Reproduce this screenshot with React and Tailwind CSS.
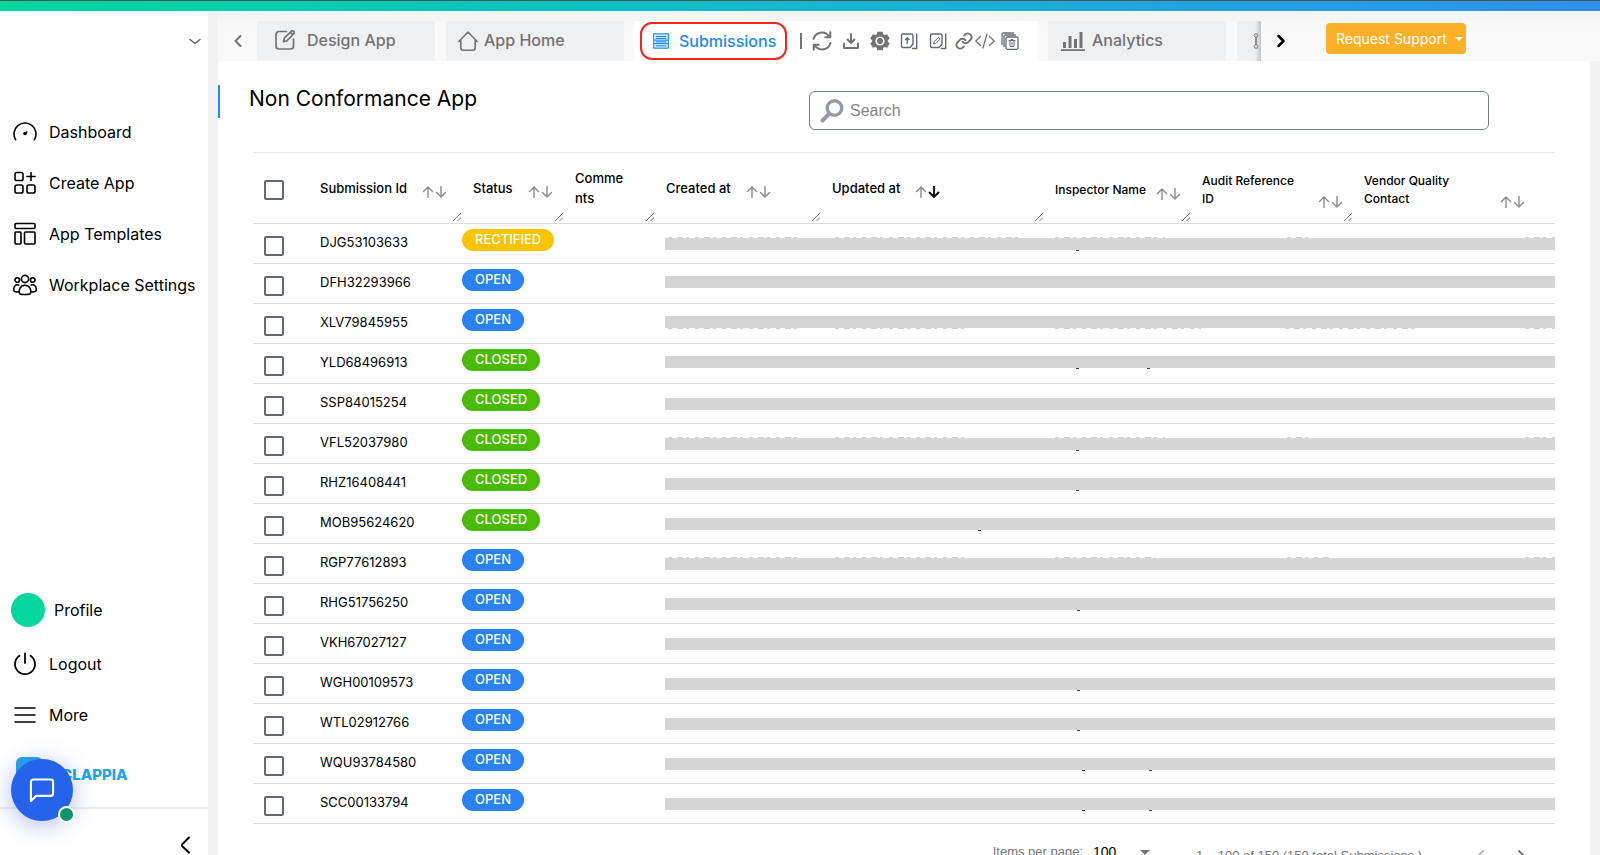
import React from "react";

const NAV_TOP = ["Dashboard", "Create App", "App Templates", "Workplace Settings"];

const ROWS = [
  ["DJG53103633", "RECTIFIED"],
  ["DFH32293966", "OPEN"],
  ["XLV79845955", "OPEN"],
  ["YLD68496913", "CLOSED"],
  ["SSP84015254", "CLOSED"],
  ["VFL52037980", "CLOSED"],
  ["RHZ16408441", "CLOSED"],
  ["MOB95624620", "CLOSED"],
  ["RGP77612893", "OPEN"],
  ["RHG51756250", "OPEN"],
  ["VKH67027127", "OPEN"],
  ["WGH00109573", "OPEN"],
  ["WTL02912766", "OPEN"],
  ["WQU93784580", "OPEN"],
  ["SCC00133794", "OPEN"],
];

const BADGE = {
  RECTIFIED: "bg-[#fbc400]",
  OPEN: "bg-[#2a82f4]",
  CLOSED: "bg-[#4bbb02]",
};

/* Rows whose masked strip sits slightly higher than centre. */
const RAISED = [1, 2, 3];
/* Descenders showing below the strip: offsets from its left edge. */
const DESCENDERS = {
  0: [411], 3: [411, 482], 5: [411], 6: [411], 7: [313], 9: [412], 11: [412],
  12: [412], 13: [417, 484], 14: [417, 484],
};
/* Letter edges showing at the top (0) or bottom (13) of the strip. */
const EDGES = {
  0: [0, [[3, 138], [170, 357], [390, 500], [622, 648], [860, 890]]],
  2: [13, [[3, 138], [170, 302], [390, 536], [620, 754], [860, 890]]],
  5: [0, [[3, 138], [170, 302], [390, 500], [622, 648], [860, 890]]],
  8: [0, [[3, 138], [170, 302], [390, 490], [622, 664], [860, 890]]],
};

function Icon({ children, className = "size-6", box = 24, w = 1.5 }) {
  return (
    <svg viewBox={`0 0 ${box} ${box}`} className={className} fill="none" stroke="currentColor"
      strokeWidth={w} strokeLinecap="round" strokeLinejoin="round" aria-hidden="true">
      {children}
    </svg>
  );
}

const NAV_ICONS = [
  <Icon key="d" w={1.6}>
    <path d="M2.6 19.7A11 11 0 1 1 21.400 19.700" />
    <circle cx="12" cy="13.500" r="1.800" fill="currentColor" stroke="none" />
    <path d="m12 13.500 1.800-1.500" />
  </Icon>,
  <Icon key="c" w={1.6}>
    <rect x="2" y="1.5" width="8" height="8" rx="1.8" />
    <rect x="2" y="14" width="8" height="8" rx="1.8" />
    <rect x="14" y="14" width="8" height="8" rx="1.8" />
    <path d="M18 1.5v8M14 5.5h8" />
  </Icon>,
  <Icon key="t" w={1.6}>
    <rect x="2" y="1.5" width="20" height="5" rx="1" />
    <rect x="2" y="10" width="6" height="12" rx="1" />
    <rect x="11.5" y="10" width="10.5" height="12" rx="1" />
  </Icon>,
  <Icon key="w" w={1.6}>
    <circle cx="12" cy="6" r="3.6" />
    <circle cx="4.3" cy="7" r="2.3" />
    <circle cx="19.7" cy="7" r="2.3" />
    <path d="M6.5 20.3c-1-2.8.3-8 5.500-8s6.500 5.200 5.500 8c-.8 1.600-10.200 1.600-11 0z" />
    <path d="M5.800 12c-3.300-1-5.500 1.700-5 5.400.2 1.500 3 1.800 5 1.400M18.200 12c3.300-1 5.500 1.700 5 5.400-.2 1.500-3 1.800-5 1.400" />
  </Icon>,
];

function NavLink({ icon, label }) {
  return (
    <a href="#" className="flex h-[51px] items-center gap-3 pl-[13px] text-base text-black">
      {icon}
      {label}
    </a>
  );
}

function Sidebar() {
  return (
    <aside className="flex w-52 shrink-0 flex-col bg-white">
      <button aria-label="Switch workplace" className="mt-[22px] mr-[5px] self-end text-[#5f6b7a]">
        <Icon className="h-4 w-4" box={16} w={1.6}><path d="m3 6.500 5 4 5-4" /></Icon>
      </button>
      <nav className="mt-[57px] flex flex-col">
        {NAV_TOP.map((label, i) => <NavLink key={label} icon={NAV_ICONS[i]} label={label} />)}
      </nav>
      <nav className="mt-auto mb-px flex flex-col">
        <a href="#" className="flex h-14 items-center gap-[9px] pl-[11px] text-base text-black">
          <span className="size-[34px] rounded-full bg-[#06d79f]" />
          Profile
        </a>
        <NavLink label="Logout" icon={
          <Icon w={1.8}><path d="M12 1.500v9.500M6.500 3.800a10 10 0 1 0 11 0" /></Icon>} />
        <NavLink label="More" icon={
          <Icon w={1.6}><path d="M2 5h20M2 12h20M2 19h20" /></Icon>} />
      </nav>
      <div className="relative h-[68px] border-b-2 border-[#ececec]">
        <div className="flex items-center pt-4 pl-4">
          <span className="h-9 w-[27px] rounded-md bg-[#2ba5ea]" />
          <span className="pl-[18px] text-[15px] font-extrabold text-[#22a3ec]">CLAPPIA</span>
        </div>
        <button aria-label="Open chat"
          className="absolute top-[18px] left-[11px] flex size-[62px] items-center justify-center rounded-full bg-[#2563eb] text-white shadow-[0_4px_24px_rgba(37,60,200,0.35)]">
          <Icon className="size-7" w={1.8}><path d="M21.500 15a2 2 0 0 1-2 2H7l-4.500 4.500V5a2 2 0 0 1 2-2h15a2 2 0 0 1 2 2z" /></Icon>
          <span className="absolute -right-0.5 -bottom-0.5 size-[17px] rounded-full border-2 border-white bg-[#0a9468]" />
        </button>
      </div>
      <div className="flex h-[46px] justify-end pt-[25px] pr-3.5">
        <button aria-label="Collapse menu">
          <Icon className="size-[18px]" box={18} w={2}><path d="M13 1.500 6.500 8q-1.300 1.200 0 2.400L13 16.500" /></Icon>
        </button>
      </div>
    </aside>
  );
}

function Tab({ icon, label, className }) {
  return (
    <button className={`flex h-10 w-[178px] shrink-0 items-center bg-[#eff0f2] pb-0.5 text-base font-medium text-[#737373] ${className}`}>
      {icon}
      {label}
    </button>
  );
}

function ToolButton({ label, children, className = "" }) {
  return <button aria-label={label} className={`flex shrink-0 items-center justify-center text-[#737373] ${className}`}>{children}</button>;
}

function TabBar() {
  return (
    <header className="flex h-[50px] items-end bg-gradient-to-b from-[#f3f3f3] to-[#f9f9f9] to-30%">
      <button aria-label="Previous tabs" className="flex h-10 w-[39px] shrink-0 items-center justify-center text-[#737373]">
        <Icon className="size-4" box={16} w={2}><path d="M10.500 3 5.500 8l5 5" /></Icon>
      </button>
      <div className="flex gap-[11px]">
        <Tab label="Design App" className="gap-3 pl-[18px]" icon={
          <Icon className="size-5" box={20} w={1.7}>
            <path d="M11.500 1.500H4a3 3 0 0 0-3 3V16a3 3 0 0 0 3 3h11.500a3 3 0 0 0 3-3V9" />
            <path d="m8.500 11.700.8-3.500 7.400-7.300q1.200-.4 2 .5.900.8.400 2L11.800 11z M15.500 2.200l2.400 2.500" />
          </Icon>} />
        <Tab label="App Home" className="gap-1.5 pl-3" icon={
          <Icon className="mt-0.5 size-5" box={20} w={1.600}>
            <path d="M.8 10.500 10 1l9.200 9.500M2.800 9.500v7q0 2.700 2.700 2.700h9q2.700 0 2.700-2.700v-7" />
          </Icon>} />
        <div className="flex h-10 w-[402px] shrink-0 items-center bg-white">
          <button className="ml-[5px] flex h-[38px] w-[147px] shrink-0 items-center gap-2.5 rounded-xl border-2 border-[#f4261a] pb-px pl-[11px] text-base font-medium text-[#1a8cf5]">
            <Icon className="size-4 shrink-0" box={16} w={1.2}>
              <path d="M.7 1v14M15.300 1v14M.7.800h14.600M.7 15.200h14.600M3 3.300h10M3 5.300h10M.7 7.200h14.600M3 8.800h10M.7 10.700h14.600M3 12.800h10" />
            </Icon>
            Submissions
          </button>
          <span className="ml-[13px] h-4 w-0.5 bg-[#737373]" />
          <ToolButton label="Refresh" className="ml-2.5">
            <Icon className="size-5" box={20} w={2}>
              <path d="M1.500 8A8.600 8.600 0 0 1 17 5.500M18.500 12A8.600 8.600 0 0 1 3 14.500M18.300 1.300v5h-5M1.700 18.700v-5h5" />
            </Icon>
          </ToolButton>
          <ToolButton label="Download" className="ml-[11px]">
            <Icon className="size-4" box={16} w={2}><path d="M8 1v8.500M4.500 6.500 8 10l3.500-3.500M1 10.500V15h14v-4.500" /></Icon>
          </ToolButton>
          <ToolButton label="Settings" className="ml-[11px]">
            <svg viewBox="0 0 20 20" className="size-5" fill="currentColor" aria-hidden="true">
              <path fillRule="evenodd" d="M7.300.8h5.400l.5 2.400 1.500.8 2.500-.7 2.500 4.200-1.800 1.700v1.600l1.800 1.700-2.500 4.200-2.500-.7-1.500.8-.5 2.400H7.300l-.5-2.400-1.500-.8-2.500.7-2.500-4.200 1.800-1.700V9.200L.3 7.500l2.500-4.200 2.500.7 1.500-.8zM10 5.400a4.600 4.600 0 1 0 0 9.200 4.600 4.600 0 0 0 0-9.200z" />
              <circle cx="10" cy="10" r="3" />
            </svg>
          </ToolButton>
          <ToolButton label="Bulk upload" className="ml-2.5">
            <Icon className="size-[18px] text-[#5f6b7a]" box={18} w={1.400}>
              <path d="M3 2h8.500q1.500 0 1.500 1.500v8.500L10 15.500H3q-1.500 0-1.500-1.500V3.500Q1.500 2 3 2zM16.700 2v14.500H12.500M7.300 11.500V6M5.500 7.500 7.300 5.700l1.800 1.800" />
            </Icon>
          </ToolButton>
          <ToolButton label="Bulk edit" className="ml-[11px]">
            <Icon className="size-[18px] text-[#5f6b7a]" box={18} w={1.400}>
              <path d="M3 2h8.500q1.500 0 1.500 1.500v8.500L10 15.500H3q-1.500 0-1.500-1.500V3.500Q1.500 2 3 2zM16.700 2v14.500H12.500" />
              <path strokeWidth="1" d="M4.800 11.700l.5-2.200 4-4 1.700 1.700-4 4z" />
            </Icon>
          </ToolButton>
          <ToolButton label="Copy link" className="ml-2">
            <Icon className="size-[18px]" w={2.500}>
              <path d="M10 13a5 5 0 0 0 7.500.5l3.500-3.500a5 5 0 0 0-7-7l-2 1.800M14 11a5 5 0 0 0-7.500-.5L3 14a5 5 0 0 0 7 7l2-1.800" />
            </Icon>
          </ToolButton>
          <ToolButton label="Embed" className="ml-0.5">
            <Icon className="h-5 w-5" box={20} w={1.300}><path d="M5.500 5.500.8 10l4.700 4.500M14.500 5.500l4.700 4.500-4.700 4.500M12 3 8 17" /></Icon>
          </ToolButton>
          <ToolButton label="Bulk delete" className="ml-1.5">
            <Icon className="size-[18px] text-[#5f6b7a]" box={18} w={1.300}>
              <path d="M1 12.500V2.500Q1 1 2.500 1h10M3 14.500v-10Q3 3 4.500 3h10" />
              <rect x="5" y="5" width="12" height="12.300" rx="1.500" />
              <path strokeWidth="1" d="M8 8.500h6M10 8.500v-1h2v1M9 9v5.500h4V9M11 10.500v2.500" />
            </Icon>
          </ToolButton>
        </div>
        <Tab label="Analytics" className="gap-[7px] pl-[13px]" icon={
          <svg viewBox="0 0 24 20" className="mt-0.5 h-5 w-6" fill="currentColor" aria-hidden="true">
            <path d="M0 18.300h24V20H0zM2 11h3v6H2zM7.500 5h3v12h-3zM13 8h3v9h-3zM18.500 1h3v16h-3z" />
          </svg>} />
        <button aria-label="Workflow"
          className="flex h-10 w-6 shrink-0 items-center justify-end bg-gradient-to-r from-[#eff0f2] from-75% to-[#c4c4c6] pr-0.5 text-[#737373]">
          <svg viewBox="0 0 6 16" className="h-4 w-1.5" fill="none" stroke="currentColor" aria-hidden="true">
            <circle cx="3" cy="2.500" r="1.800" /><circle cx="3" cy="13.500" r="1.800" /><path d="M3 4.500v7" strokeWidth="1.600" />
          </svg>
        </button>
      </div>
      <button aria-label="Next tabs" className="flex h-10 w-10 shrink-0 items-center justify-center text-black">
        <Icon className="size-4" box={16} w={2.500}><path d="M5.500 3l5 5-5 5" /></Icon>
      </button>
      <button className="mr-3 mb-[7px] ml-[25px] flex h-[31px] w-[140px] shrink-0 items-center gap-2 rounded bg-[#ffb029] pl-2.5 text-sm text-white">
        Request Support
        <svg viewBox="0 0 8 4" className="h-1 w-2 shrink-0" fill="currentColor" aria-hidden="true"><path d="M0 0h8L4 4z" /></svg>
      </button>
    </header>
  );
}

function Arrow({ up, active }) {
  return (
    <Icon className={active ? "h-3 w-3 text-black" : "h-3 w-3 text-[#8c8c8c]"} box={12} w={active ? 1.800 : 1.400}>
      <path d={up ? "M6 11.500V1M1.500 5.500 6 1l4.500 4.500" : "M6 .5V11M1.500 6.500 6 11l4.500-4.500"} />
    </Icon>
  );
}

function Head({ label, sort = "none", resize = true, small, wrap, end = "pr-2.5" }) {
  return (
    <th scope="col" className={`relative h-[71px] p-0 text-left font-medium ${small ? "pt-1 text-xs leading-[18px]" : "text-[13px] leading-5"}`}>
      <div className={`flex items-center pl-[11px] ${end} ${wrap ? "justify-between" : small ? "gap-2.5" : "gap-[15px]"}`}>
        <span className={wrap || "whitespace-nowrap"}>{label}</span>
        {sort !== "off" && (
          <span className={`flex gap-px ${wrap ? "pt-6" : "pt-2"}`}>
            <Arrow up />
            <Arrow active={sort === "down"} />
          </span>
        )}
      </div>
      {resize && (
        <svg viewBox="0 0 8 8" className="absolute right-px bottom-0.5 size-2 text-[#777]" stroke="currentColor" aria-hidden="true">
          <path d="M0 8 8 0M4.500 8 8 4.500" />
        </svg>
      )}
    </th>
  );
}

function Check({ label }) {
  return (
    <input type="checkbox" aria-label={label}
      className="block size-5 appearance-none rounded-xs border-2 border-[#5f6b7a] bg-white checked:bg-[#5f6b7a]" />
  );
}

function MaskedStrip({ row }) {
  const [edgeY, spans] = EDGES[row] || [0, []];
  return (
    <svg className="block h-3.5 w-full" aria-hidden="true">
      <rect y="1" width="100%" height="12" fill="#d5d5d5" />
      {spans.map(([from, to]) => (
        <path key={from} d={`M${from} ${edgeY + 0.5}H${to}`} stroke="#cfcfcf" strokeDasharray="4 5 6 3 3 6" />
      ))}
      {(DESCENDERS[row] || []).map((x) => <rect key={x} x={x} y="13" width="3" height="1" fill="#444" />)}
    </svg>
  );
}

function SubmissionsTable() {
  return (
    <table className="w-full table-fixed border-collapse border-t border-[#e8e8e8] text-black">
      <colgroup>
        <col className="w-[56px]" />
        <col className="w-[153px]" />
        <col className="w-[102px]" />
        <col className="w-[91px]" />
        <col className="w-[166px]" />
        <col className="w-[223px]" />
        <col className="w-[147px]" />
        <col className="w-[162px]" />
        <col />
      </colgroup>
      <thead>
        <tr className="border-b border-[#dcdcdc]">
          <th scope="col" className="p-0 pt-1 pl-[11px]"><Check label="Select all submissions" /></th>
          <Head label="Submission Id" />
          <Head label="Status" />
          <Head label="Comments" sort="off" wrap="w-[52px] break-all" />
          <Head label="Created at" />
          <Head label="Updated at" sort="down" />
          <Head label="Inspector Name" small />
          <Head label="Audit Reference ID" small wrap="w-[100px]" />
          <Head label="Vendor Quality Contact" small wrap="w-[100px]" end="pr-[30px]" resize={false} />
        </tr>
      </thead>
      <tbody>
        {ROWS.map(([id, status], i) => (
          <tr key={id} className="h-10 border-b border-[#dcdcdc] align-top">
            <td className="p-0 pt-3 pl-[11px]"><Check label={`Select ${id}`} /></td>
            <td className="p-0 pt-2 pl-[11px] text-[13px] leading-5">{id}</td>
            <td className="p-0 pt-[5px]">
              <span className={`flex h-[22px] w-fit items-center rounded-full px-[13px] pb-px text-[13px] font-medium text-white ${BADGE[status]}`}>
                {status}
              </span>
            </td>
            <td />
            <td colSpan={5} className={RAISED.includes(i) ? "p-0 pt-[11px] pl-2.5" : "p-0 pt-[13px] pl-2.5"}>
              <MaskedStrip row={i} />
            </td>
          </tr>
        ))}
      </tbody>
    </table>
  );
}

function Pager() {
  return (
    <footer className="flex items-start justify-end pt-5 pr-[21px] font-['Liberation_Sans',sans-serif] text-[13px] leading-4 text-[#757575]">
      <label htmlFor="page-size">Items per page:</label>
      <span className="mr-[46px] ml-2.5 flex w-[57px] items-center">
        <select id="page-size" defaultValue="100" className="w-[47px] appearance-none bg-transparent text-sm leading-4 text-black">
          <option>100</option>
        </select>
        <svg viewBox="0 0 10 5" className="h-[5px] w-2.5" fill="currentColor" aria-hidden="true"><path d="M0 0h10L5 5z" /></svg>
      </span>
      <span className="w-[272px] pt-1">1 – 100 of 150 (150 total Submissions )</span>
      <button aria-label="Previous page" className="text-[#b5b5b5]">
        <Icon w={2}><path d="m15 7-6 6 6 6" /></Icon>
      </button>
      <button aria-label="Next page" className="ml-[18px]">
        <Icon w={2}><path d="m9 7 6 6-6 6" /></Icon>
      </button>
    </footer>
  );
}

export default function App() {
  return (
    <div className="flex h-screen flex-col overflow-hidden bg-[#f2f2f2] font-['Inter',sans-serif]">
      <div className="h-[11px] shrink-0 border-t border-[#4a5555] bg-gradient-to-r from-[#07d89d] to-[#2f90f3]" />
      <div className="flex min-h-0 flex-1">
        <Sidebar />
        <div className="flex min-w-0 flex-1 flex-col pl-2.5">
          <TabBar />
          <main className="mr-2.5 min-h-0 flex-1 overflow-hidden bg-white">
            <div className="flex items-start pt-6">
              <h1 className="flex h-[33px] items-center border-l-2 border-[#1a8cf5] pb-[5px] pl-[29px] text-[21px] text-black">
                Non Conformance App
              </h1>
              <label className="mt-1.5 mr-[101px] ml-auto flex h-[39px] w-[680px] items-center gap-1.5 rounded-md border border-[#737d88] pl-2.5 text-[#959ca5]">
                <Icon className="size-6" w={3.400}><circle cx="14.500" cy="9" r="7.300" /><path d="m9 15-6.500 6.500" strokeWidth="4" /></Icon>
                <input type="search" placeholder="Search" aria-label="Search submissions"
                  className="min-w-0 flex-1 bg-transparent font-['Liberation_Sans',sans-serif] text-base text-black outline-none placeholder:text-[#858585]" />
              </label>
            </div>
            <div className="mt-[22px] mr-[35px] ml-[35px]">
              <SubmissionsTable />
              <Pager />
            </div>
          </main>
        </div>
      </div>
    </div>
  );
}
